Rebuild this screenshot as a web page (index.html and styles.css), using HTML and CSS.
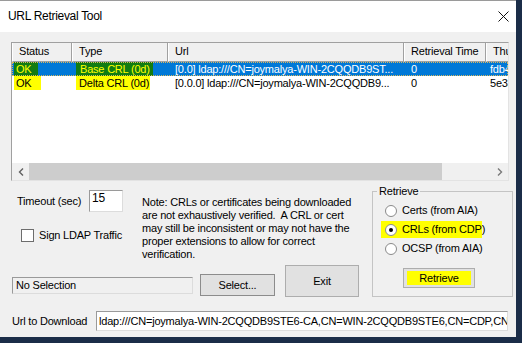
FILE: index.html
```html
<!DOCTYPE html>
<html lang="en">
<head>
  <meta charset="UTF-8">
  <title>URL Retrieval Tool</title>
  <link rel="stylesheet" href="styles.css">
</head>
<body>

  <!-- Dialog window -->
  <div class="window">
    <header class="titlebar">
      <span class="title">URL Retrieval Tool</span>
      <svg class="close" width="11" height="11" viewBox="0 0 11 11">
        <path d="M0.5 0.5 L10.5 10.5 M10.5 0.5 L0.5 10.5" stroke="#111" stroke-width="1" fill="none"/>
      </svg>
    </header>

    <main class="dialog">
      <!-- Result list -->
      <div class="listview">
        <div class="lv-head">
          <div class="hcell">Status</div>
          <div class="hcell">Type</div>
          <div class="hcell">Url</div>
          <div class="hcell">Retrieval Time</div>
          <div class="hcell">Thumbprint</div>
        </div>
        <div class="lv-row selected">
          <div class="cell c-status"><span class="mark ok-1">OK</span></div>
          <div class="cell c-type"><span class="mark type-1">Base CRL (0d)</span></div>
          <div class="cell">[0.0] ldap:///CN=joymalya-WIN-2CQQDB9ST...</div>
          <div class="cell">0</div>
          <div class="cell c-thumb">fdb43a</div>
        </div>
        <div class="lv-row">
          <div class="cell c-status"><span class="mark ok-2">OK</span></div>
          <div class="cell c-type"><span class="mark type-2">Delta CRL (0d)</span></div>
          <div class="cell">[0.0.0] ldap:///CN=joymalya-WIN-2CQQDB9...</div>
          <div class="cell">0</div>
          <div class="cell c-thumb">5e3a1c</div>
        </div>
        <div class="lv-fill"></div>
        <div class="hscroll">
          <div class="arrow">
            <svg width="6" height="8" viewBox="0 0 6 8"><path d="M5 0.5 L1.5 4 L5 7.5" stroke="#606060" stroke-width="1.4" fill="none"/></svg>
          </div>
          <div class="thumb"></div>
          <div class="track"></div>
          <div class="arrow">
            <svg width="6" height="8" viewBox="0 0 6 8"><path d="M1 0.5 L4.5 4 L1 7.5" stroke="#7a7a7a" stroke-width="1.4" fill="none"/></svg>
          </div>
        </div>
      </div>

      <div class="middle">
        <div class="left">
          <div class="upper">
            <div class="opts">
              <div class="timeout">
                <span class="timeout-label">Timeout (sec)</span>
                <div class="edit num">15</div>
              </div>
              <div class="check">
                <span class="checkbox"></span>
                <span class="check-label">Sign LDAP Traffic</span>
              </div>
            </div>
            <p class="note">
              Note: CRLs or certificates being downloaded<br>
              are not exhaustively verified.&nbsp; A CRL or cert<br>
              may still be inconsistent or may not have the<br>
              proper extensions to allow for correct<br>
              verification.
            </p>
          </div>
          <div class="lower">
            <div class="edit nosel">No Selection</div>
            <div class="btn select">Select...</div>
            <div class="btn exit">Exit</div>
          </div>
        </div>

        <fieldset class="group">
          <legend>Retrieve</legend>
          <div class="radios">
            <div class="radio-row"><span class="radio"></span><span>Certs (from AIA)</span></div>
            <div class="radio-row marked"><span class="radio on"></span><span>CRLs (from CDP)</span></div>
            <div class="radio-row"><span class="radio"></span><span>OCSP (from AIA)</span></div>
          </div>
          <div class="btn retrieve"><span>Retrieve</span></div>
        </fieldset>
      </div>

      <div class="urlrow">
        <span class="url-label">Url to Download</span>
        <div class="edit url">ldap:///CN=joymalya-WIN-2CQQDB9STE6-CA,CN=WIN-2CQQDB9STE6,CN=CDP,CN=Public Key Services</div>
      </div>
    </main>
  </div>

</body>
</html>
```

FILE: styles.css
```css
/* Base styles */
* {
  margin: 0;
  padding: 0;
  box-sizing: border-box;
}

body {
  width: 522px;
  height: 343px;
  overflow: hidden;
  background-color: #1b2d48;
  font-family: 'Liberation Sans', Arial, sans-serif;
  font-size: 11px;
  line-height: 13px;
  letter-spacing: -0.2px;
  color: #000;
}

/* Window frame */
.window {
  width: 516px;
  height: 337px;
  background-color: #f0f0f0;
  border-top: 1px solid #9a9a9a;
  display: flex;
  flex-direction: column;
}

.titlebar {
  height: 31px;
  background-color: #ffffff;
  display: flex;
  align-items: center;
  justify-content: space-between;
  padding: 0 7px 0 8px;
}

.title {
  font-size: 12px;
  letter-spacing: -0.3px;
}

.dialog {
  flex: 1;
  padding: 10px 0 0 11px;
}

/* List view */
.listview {
  width: 498px;
  height: 139px;
  border: 1px solid;
  border-color: #a0a0a0 #e3e3e3 #e3e3e3 #a0a0a0;
  background-color: #ffffff;
  overflow: hidden;
  display: flex;
  flex-direction: column;
}

.lv-head,
.lv-row {
  display: grid;
  grid-template-columns: 60px 96px 236px 82px 60px;
  white-space: nowrap;
}

.hcell {
  height: 19px;
  line-height: 17px;
  padding-left: 6px;
  background-color: #f0f0f0;
  border-left: 1px solid #ffffff;
  border-right: 1px solid #a0a0a0;
  border-bottom: 1px solid #a0a0a0;
  overflow: hidden;
}

.lv-row {
  height: 14px;
  line-height: 14px;
}

.cell {
  padding-left: 7px;
  overflow: hidden;
}

.c-status {
  padding-left: 2px;
}

.c-type,
.c-thumb {
  padding-left: 4px;
}

.lv-row.selected {
  background-color: #0078d7;
  color: #ffffff;
  outline: 1px dotted #d8b860;
  outline-offset: -1px;
}

.mark {
  display: inline-block;
  padding-left: 3px;
  background-color: #ffff00;
  color: #000;
}

.selected .mark {
  background-color: #127c12;
  color: #ffff00;
}

.ok-1 { width: 24px; padding-left: 2px; }
.ok-2 { width: 27px; padding-left: 2px; }
.type-1 { width: 77px; padding-left: 4px; }
.type-2 { width: 74px; }

.lv-fill {
  flex: 1;
}

.hscroll {
  height: 17px;
  display: flex;
  background-color: #f0f0f0;
}

.arrow {
  width: 17px;
  display: flex;
  align-items: center;
  justify-content: center;
}

.thumb {
  width: 413px;
  background-color: #cdcdcd;
}

.track {
  flex: 1;
}

/* Middle area */
.middle {
  display: flex;
  margin-top: 4px;
}

.left {
  width: 361px;
  display: flex;
  flex-direction: column;
}

.upper {
  display: flex;
  padding-top: 5px;
}

.opts {
  width: 131px;
}

.timeout {
  display: flex;
  align-items: center;
  height: 22px;
  padding-left: 6px;
}

.timeout-label {
  width: 72px;
}

.edit {
  border: 1px solid;
  border-color: #9a9a9a #dcdcdc #dcdcdc #9a9a9a;
  background-color: #ffffff;
  white-space: nowrap;
  overflow: hidden;
}

.num {
  width: 34px;
  height: 22px;
  padding: 1px 0 0 2px;
  font-size: 12px;
}

.check {
  display: flex;
  align-items: center;
  margin-top: 17px;
  padding-left: 10px;
}

.checkbox {
  width: 13px;
  height: 13px;
  border: 1px solid #6d6d6d;
  background-color: #ffffff;
}

.check-label {
  margin-left: 5px;
}

.note {
  margin-top: 6px;
  white-space: nowrap;
}

.lower {
  display: flex;
  align-items: flex-end;
  margin-top: 4px;
}

.nosel {
  width: 181px;
  height: 17px;
  margin: 0 0 3px 1px;
  padding-left: 3px;
  line-height: 15px;
  background-color: #f0f0f0;
}

.btn {
  background-color: #e1e1e1;
  border: 1px solid #adadad;
  display: flex;
  align-items: center;
  justify-content: center;
}

.select {
  width: 75px;
  height: 22px;
  margin: 0 0 1px 7px;
  border-color: #8c8c8c;
}

.exit {
  width: 74px;
  height: 32px;
  margin-left: 10px;
}

/* Retrieve group */
.group {
  width: 141px;
  height: 112px;
  border: 1px solid #c4c4c4;
}

.group legend {
  margin-left: 4px;
  padding: 0 2px;
  line-height: 12px;
}

.radios {
  display: flex;
  flex-direction: column;
  gap: 2px;
  margin: 5px 0 0 8px;
}

.radio-row {
  width: 101px;
  height: 17px;
  display: flex;
  align-items: center;
  padding-left: 4px;
  white-space: nowrap;
}

.radio-row.marked {
  background-color: #ffff00;
}

.radio {
  flex: none;
  width: 12px;
  height: 12px;
  margin-right: 5px;
  border-radius: 50%;
  border: 1px solid #8a8a8a;
  background-color: #ffffff;
  display: flex;
  align-items: center;
  justify-content: center;
}

.radio.on::after {
  content: '';
  width: 4px;
  height: 4px;
  border-radius: 50%;
  background-color: #000;
}

.retrieve {
  width: 72px;
  height: 20px;
  margin: 11px 0 0 30px;
  padding: 2px 3px;
}

.retrieve span {
  flex: 1;
  align-self: stretch;
  background-color: #ffff00;
  display: flex;
  align-items: center;
  justify-content: center;
}

/* Url row */
.urlrow {
  display: flex;
  align-items: center;
  margin-top: 14px;
}

.url-label {
  width: 85px;
  padding-left: 1px;
}

.url {
  width: 412px;
  height: 20px;
  padding-left: 2px;
  line-height: 18px;
}
```
